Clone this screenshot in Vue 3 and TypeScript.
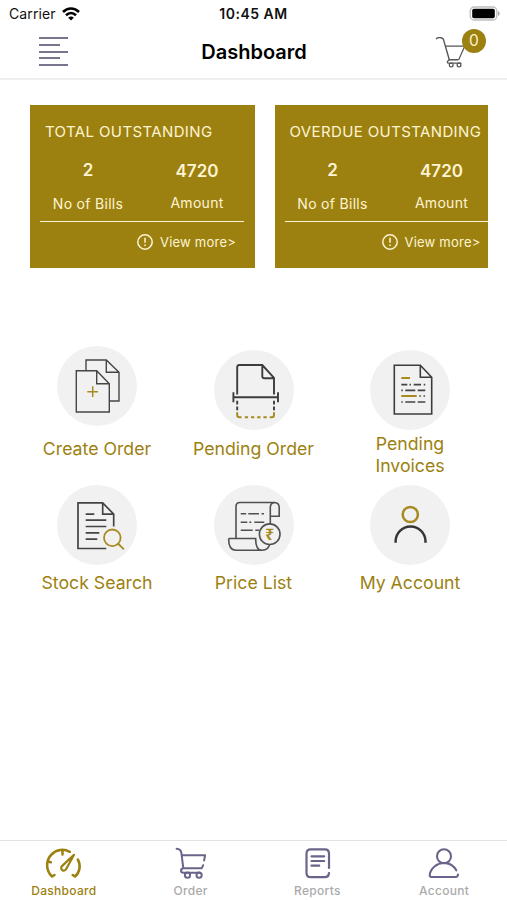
<script setup lang="ts">
interface Summary {
  title: string
  bills: number
  amount: number
  wide: boolean
}

const summaries: Summary[] = [
  { title: 'TOTAL OUTSTANDING', bills: 2, amount: 4720, wide: false },
  { title: 'OVERDUE OUTSTANDING', bills: 2, amount: 4720, wide: true },
]
</script>

<template>
  <div class="screen">
    <header class="top">
      <div class="status">
        <div class="carrier">
          <span>Carrier</span>
          <svg width="18" height="14" viewBox="0 0 18 14" fill="none" stroke="#000" stroke-width="2.6">
            <path d="M1 5C5.600 .4 12.400 .4 17 5" />
            <path d="M4 8.200c3-2.900 7-2.900 10 0" />
            <path d="M6.200 10.700c1.700-1.600 3.900-1.600 5.600 0L9 13.600z" fill="#000" stroke="none" />
          </svg>
        </div>
        <div class="clock">10:45 AM</div>
        <svg class="battery" width="32" height="16" viewBox="0 0 32 16">
          <rect x="1.200" y="1" width="26.600" height="13" rx="4" fill="#fff" stroke="#bdbdbd" stroke-width="1.300" />
          <rect x="3.200" y="2.800" width="22.600" height="9.400" rx="1.800" fill="#000" />
          <path d="M29 5c2.200.8 2.200 4.200 0 5z" fill="#aaa" />
        </svg>
      </div>
      <div class="bar">
        <div class="menu"><i /><i class="short" /><i /><i class="short" /><i /></div>
        <h1>Dashboard</h1>
        <div class="cart">
          <svg width="32" height="32" viewBox="0 0 32 32" fill="none" stroke="#555" stroke-width="1.200" stroke-linecap="round" stroke-linejoin="round">
            <path d="M1.500 1.800c0-1.600 6-2 7 .8l5.800 20.100H23" stroke-width="1.400" />
            <path d="M11 9.200h18.700L23.800 22.400M14.300 22.700l-1.700 1.500c-.8 1 0 2 1.400 2h12" />
            <circle cx="16.200" cy="28" r="1.900" /><circle cx="24" cy="28" r="1.900" />
          </svg>
          <span class="badge">0</span>
        </div>
      </div>
    </header>

    <section class="cards">
      <article v-for="s in summaries" :key="s.title" class="card" :class="{ wide: s.wide }">
        <h2>{{ s.title }}</h2>
        <div class="figures">
          <div class="bills"><b>{{ s.bills }}</b><span>No of Bills</span></div>
          <div class="amount"><b>{{ s.amount }}</b><span>Amount</span></div>
        </div>
        <div class="more">
          <svg width="16" height="16" viewBox="0 0 16 16" fill="none" stroke="#fff4d2" stroke-width="1.500">
            <circle cx="8" cy="8" r="7.200" /><path d="M8 3.800v5M8 10.500v1.600" />
          </svg>
          <span>View more&gt;</span>
        </div>
      </article>
    </section>

    <main class="tiles">
      <div class="tile">
        <svg class="disc" viewBox="0 0 80 80">
          <g stroke="#454545" stroke-width="1.400">
            <path d="M29 24.700V14h20.300L62 26.300V55h-9.700M49.300 14v12.300H62" />
            <path d="M19.300 24.700h20.400l12.600 13V66h-33zM39.700 24.700v13h12.600" />
          </g>
          <path class="gold" d="M30.300 45.700H41M35.700 40.300v10.800" stroke-width="1.500" />
        </svg>
        <p>Create Order</p>
      </div>
      <div class="tile low">
        <svg class="disc" viewBox="0 0 80 80">
          <g stroke="#3c3c3c" stroke-width="1.900">
            <path d="M23.200 44.500V17.300q0-2.300 2.300-2.300h22.800L60 27.800v16.700M48.300 15v11.300q0 2 2 2H60" />
            <path d="M19.400 47.300H64M19.400 42.300v10M64 42.300v10" />
            <path d="M23.200 50.800v3.600M23.200 56.600v3.600M60 50.800v3.600M60 56.600v3.600" />
          </g>
          <path class="gold" d="M23.200 62.300V65q0 2.300 2.300 2.300h2M55.700 67.300h2q2.300 0 2.300-2.300v-2.700M30.800 67.300h3.300M37 67.300h3.300M43.200 67.300h3.300M49.400 67.300h3.300" stroke-width="2" />
        </svg>
        <p>Pending Order</p>
      </div>
      <div class="tile low two-line">
        <svg class="disc" viewBox="0 0 80 80">
          <path d="M24.300 15.300h26l11.400 12V64H24.300zM50.300 15.300v12h11.400" stroke="#3c3c3c" stroke-width="1.600" />
          <path d="M31.300 34.700h6M39.500 34.700h1.500M43.700 34.700H51M53.700 34.700h1.500M31.300 40.300h1.500M35.300 40.300h10M47.700 40.300h7.600M49.300 46h1.500M53.500 46H55M31.300 52h1.500M35.300 52h10M47.700 52h7.600" stroke="#444" stroke-width="1.700" />
          <path class="gold" d="M31.300 28H40M31.300 46h15.400" stroke-width="2" />
        </svg>
        <p>Pending<br>Invoices</p>
      </div>
      <div class="tile lower-row">
        <svg class="disc" viewBox="0 0 80 80">
          <path d="M49.300 63.500H21V17.800h24.700l11 11.400v12.300M45.700 17.800v11.400h11M28.700 29.200h8.600M28.700 35.200h20.600M28.700 41.500h20.600M28.700 47.800h13.600M28.700 54.200h11.600" stroke="#444" stroke-width="1.700" />
          <g class="gold" stroke-width="1.800"><circle cx="55.300" cy="52.800" r="8.300" /><path d="m61 58.500 5.900 5.900" /></g>
        </svg>
        <p>Stock Search</p>
      </div>
      <div class="tile lower-row">
        <svg class="disc" viewBox="0 0 80 80">
          <g stroke="#505050" stroke-width="1.600">
            <path d="M22 53.500v-32q0-4 4-4h34.500q4.700.3 4.700 5v8.700h-8.800M60.500 17.500q-4.200.7-4.200 5V39" />
            <path d="M14.700 53.500h27q-.3 11.700 6.500 11.700 6.300 0 7.500-6M14.700 53.500q-.4 11.700 7.500 11.700h26" />
            <path d="M26.700 28.800h5.500M34.300 28.800H45M47.500 28.800h2.500M26.700 37.200h6.600M35.300 37.200h2M40.300 37.200h10M26.700 45.200h12M41.300 45.200H45" />
            <circle cx="55.700" cy="49.200" r="10.300" fill="#f1f1f1" />
          </g>
          <text x="55.700" y="54.800" text-anchor="middle">₹</text>
        </svg>
        <p>Price List</p>
      </div>
      <div class="tile lower-row">
        <svg class="disc" viewBox="0 0 80 80">
          <circle class="gold" cx="40.300" cy="29.500" r="7.600" stroke-width="2.500" />
          <path d="M25.600 57.700v-1.200a14.900 14.900 0 0 1 29.900 0v1.200" stroke="#363636" stroke-width="2.500" />
        </svg>
        <p>My Account</p>
      </div>
    </main>

    <nav class="tabs">
      <div class="tab active">
        <svg width="40" height="34" viewBox="-1.500 0 40 34" fill="none" stroke="#9c8110" stroke-width="2.500" stroke-linecap="round" stroke-linejoin="round">
          <path d="M7.500 30.500C1.200 24.500 1 14.500 7 8.500c5-5 12.400-6 18.300-2.700M33.300 13.500c3.300 5.500 2.200 13-2.800 17M7.500 30.500l2.500-1.500M30.500 30.500 28.200 29M18 4.800v3.700M3.500 15.500l2.800.8" />
          <path d="M29.500 8.800 21.700 23c-2 3.500-6.500.7-4.500-2.600z" stroke-width="2.200" />
        </svg>
        <span>Dashboard</span>
      </div>
      <div class="tab">
        <svg width="40" height="34" viewBox="-0.800 0.500 40 34" fill="none" stroke="#69648a" stroke-width="2" stroke-linecap="round" stroke-linejoin="round">
          <path d="M5.800 3.200c3.300.1 4.500 1.600 4.800 4.300l1.900 15.200H31l1.400-3M11.300 9.800h23l-1 5.200M12.500 22.700c-3 .5-3 4.500 0 4.500h16.300" />
          <circle cx="16.700" cy="29.700" r="2.600" /><circle cx="28.300" cy="29.700" r="2.600" />
        </svg>
        <span>Order</span>
      </div>
      <div class="tab">
        <svg width="40" height="34" viewBox="-0.500 0.500 40 34" fill="none" stroke="#69648a" stroke-width="2.200" stroke-linecap="round" stroke-linejoin="round">
          <path d="M31.500 22.500V8q0-4.200-4.200-4.200H13.200Q9 3.800 9 8v19.500q0 4.200 4.200 4.200h14.100q3.700 0 4.200-4.200M14 10.800h12.700M14 15.500h12.700M14 20.200h7.700" />
        </svg>
        <span>Reports</span>
      </div>
      <div class="tab">
        <svg width="40" height="34" viewBox="0 0.500 40 34" fill="none" stroke="#69648a" stroke-width="2.100" stroke-linecap="round" stroke-linejoin="round">
          <circle cx="20" cy="10.800" r="7" />
          <path d="M32.300 24.800C27.500 16.300 17 15.500 10.500 21c-3 2.600-4.500 5.400-4.800 8.500 0 1.200.7 2 1.900 2h24.200q2 0 2.200-2.500" />
        </svg>
        <span>Account</span>
      </div>
    </nav>
  </div>
</template>

<style>
body {
  margin: 0;
  background: #fff;
}
</style>

<style scoped>
.screen {
  width: 507px;
  height: 900px;
  display: flex;
  flex-direction: column;
  overflow: hidden;
  background: #fff;
  font-family: Inter, "Liberation Sans", sans-serif;
}
.top {
  height: 78px;
  border-bottom: 2px solid #eee;
}
.status {
  height: 27px;
  display: grid;
  grid-template-columns: 1fr 1fr 1fr;
  align-items: center;
  padding: 0 6px;
  font-size: 14px;
  line-height: 27px;
  color: #111;
}
.carrier {
  display: flex;
  align-items: center;
  gap: 6px;
  padding-left: 3px;
  letter-spacing: 0.1px;
}
.clock {
  text-align: center;
  font-weight: 600;
  letter-spacing: 0.500px;
}
.battery {
  justify-self: end;
}
.bar {
  height: 51px;
  display: grid;
  grid-template-columns: 1fr 1fr 1fr;
  align-items: center;
}
.menu {
  margin: -2px 0 0 39px;
  display: flex;
  flex-direction: column;
  gap: 4.700px;
}
.menu i {
  width: 29px;
  height: 2px;
  background: #79758f;
}
.menu .short {
  width: 21px;
}
h1 {
  margin: 0;
  padding-left: 1px;
  text-align: center;
  font-size: 20px;
  font-weight: 600;
  line-height: 51px;
}
.cart {
  position: relative;
  width: 52px;
  height: 32px;
  justify-self: end;
  margin-right: 20px;
}
.badge {
  position: absolute;
  top: -8px;
  right: 1px;
  width: 24px;
  height: 24px;
  border-radius: 50%;
  background: #9c8110;
  color: #fff4d2;
  font-size: 15.500px;
  line-height: 24px;
  text-align: center;
}
.cards {
  display: flex;
  gap: 19.500px;
  width: 457.500px;
  margin: 25px 0 0 30px;
  overflow: hidden;
}
.card {
  box-sizing: border-box;
  flex: 0 0 225px;
  min-width: 0;
  height: 163px;
  padding: 0 11px 0 10px;
  background: #9c8110;
  color: #fff4d2;
}
.card.wide {
  flex-basis: 250px;
}
h2 {
  margin: 17px 0 0 5px;
  font-size: 15px;
  line-height: 20px;
  font-weight: 400;
  letter-spacing: 0.380px;
  white-space: nowrap;
}
.figures {
  display: flex;
  height: 79px;
  border-bottom: 1.500px solid #fff4d2;
}
.figures > div {
  display: flex;
  flex: none;
  flex-direction: column;
  align-items: center;
}
.figures b {
  font-size: 17px;
  font-weight: 600;
  line-height: 20px;
}
.figures span {
  font-size: 14px;
  line-height: 20px;
  letter-spacing: 0.300px;
}
.figures .bills {
  width: 96px;
  padding-top: 18px;
  gap: 14px;
}
.figures .amount {
  width: 122px;
  margin-right: -14px;
  padding-top: 19px;
  gap: 12px;
}
.more {
  display: flex;
  align-items: center;
  gap: 7px;
  height: 40px;
  margin-left: 97px;
  font-size: 13px;
  letter-spacing: 0.220px;
  white-space: nowrap;
}
.tiles {
  display: grid;
  grid-template-columns: repeat(3, 156.500px);
  grid-template-rows: 138.500px 130px;
  justify-content: center;
  margin-top: 78px;
  flex: 1;
}
.tile {
  display: flex;
  flex-direction: column;
  align-items: center;
  gap: 12px;
}
.tile.low {
  padding-top: 4px;
  gap: 8px;
}
.tile.two-line {
  gap: 3px;
}
.tile.lower-row {
  gap: 7px;
}
.disc {
  width: 80px;
  height: 80px;
  border-radius: 50%;
  background: #f1f1f1;
  fill: none;
}
.gold {
  stroke: #a88b20;
}
.disc text {
  fill: #a88b20;
  font: 700 16px "Noto Sans", "DejaVu Sans", sans-serif;
}
.tile p {
  margin: 0;
  font-size: 17.700px;
  line-height: 22px;
  text-align: center;
  white-space: nowrap;
  color: #9c8110;
}
.tabs {
  box-sizing: border-box;
  height: 60px;
  border-top: 1px solid #e2e2e2;
  display: grid;
  grid-template-columns: repeat(4, 1fr);
}
.tab {
  display: flex;
  flex-direction: column;
  align-items: center;
  padding-top: 5px;
  font-size: 12px;
  font-weight: 500;
  letter-spacing: 0.300px;
  color: #aaa;
}
.tab span {
  line-height: 22px;
  padding-left: 1px;
}
.tab.active {
  color: #9c8110;
}
</style>
